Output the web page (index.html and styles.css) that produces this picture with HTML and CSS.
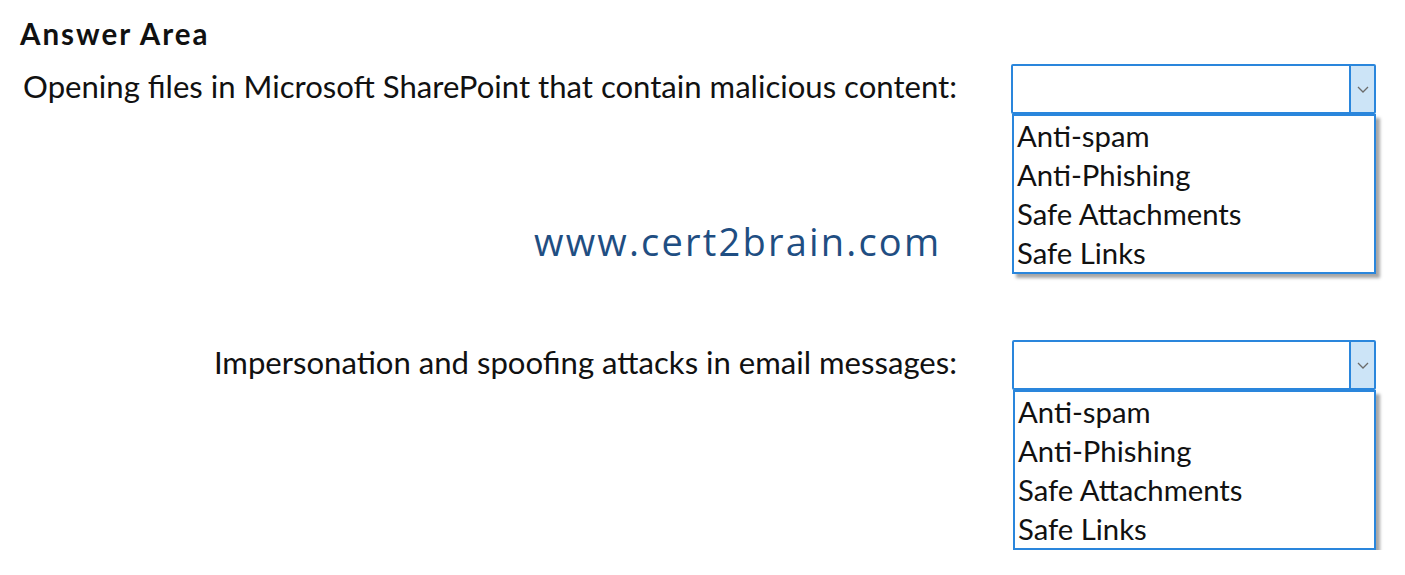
FILE: index.html
```html
<!DOCTYPE html>
<html lang="en">
<head>
  <meta charset="UTF-8" />
  <title>Answer Area</title>
  <link rel="stylesheet" href="styles.css">
</head>
<body>
  <main class="answer-area">
    <h1 class="title">Answer Area</h1>

    <div class="question">
      <p class="prompt">Opening files in Microsoft SharePoint that contain malicious content:</p>
      <div class="dropdown">
        <div class="select-box">
          <span class="arrow">
            <svg width="12" height="7" viewBox="0 0 12 7"><path d="M1 1 L6 6 L11 1" fill="none" stroke="#6b6b6b" stroke-width="1.3"/></svg>
          </span>
        </div>
        <ul class="options">
          <li>Anti-spam</li>
          <li>Anti-Phishing</li>
          <li>Safe Attachments</li>
          <li>Safe Links</li>
        </ul>
      </div>
    </div>

    <div class="question second">
      <p class="prompt">Impersonation and spoofing attacks in email messages:</p>
      <div class="dropdown">
        <div class="select-box">
          <span class="arrow">
            <svg width="12" height="7" viewBox="0 0 12 7"><path d="M1 1 L6 6 L11 1" fill="none" stroke="#6b6b6b" stroke-width="1.3"/></svg>
          </span>
        </div>
        <ul class="options">
          <li>Anti-spam</li>
          <li>Anti-Phishing</li>
          <li>Safe Attachments</li>
          <li>Safe Links</li>
        </ul>
      </div>
    </div>

    <div class="watermark">www.cert2brain.com</div>
  </main>
</body>
</html>
```

FILE: styles.css
```css
:root {
  --border: #2a86dc;
  --text: #111;
  --mark: #1f4e82;
}

body {
  margin: 0;
  background: #fff;
  color: var(--text);
  font-family: 'Lato', 'Liberation Sans', sans-serif;
}

.answer-area {
  position: relative;
  padding: 16px 0 0 20px;
}

.title {
  margin: 0;
  font-size: 29.5px;
  font-weight: 700;
  letter-spacing: 2px;
  line-height: 36px;
}

.question {
  display: grid;
  grid-template-columns: 937px 365px;
  column-gap: 54px;
  margin-top: 12px;
}

.question.second {
  margin-top: 66px;
}

.second .dropdown { margin-left: 1px; }

.prompt {
  margin: 0;
  text-align: right;
  font-size: 31.1px;
  line-height: 44px;
  white-space: nowrap;
}

.select-box {
  height: 46px;
  border: 2px solid var(--border);
  border-radius: 2px;
  display: flex;
  justify-content: flex-end;
}

.arrow {
  width: 23px;
  background: #cce4f7;
  border-left: 2px solid var(--border);
  display: flex;
  align-items: center;
  justify-content: center;
}

.options {
  list-style: none;
  margin: 0 0 0 1px;
  padding: 0 0 0 3px;
  border: 2px solid var(--border);
  box-shadow: 4px 4px 3px rgba(0, 0, 0, 0.35);
  font-size: 29.3px;
  line-height: 39px;
}

.watermark {
  position: absolute;
  left: 534px;
  top: 218px;
  color: var(--mark);
  font-family: 'Open Sans', sans-serif;
  font-size: 38px;
  letter-spacing: 2.2px;
  line-height: 46px;
}
```
